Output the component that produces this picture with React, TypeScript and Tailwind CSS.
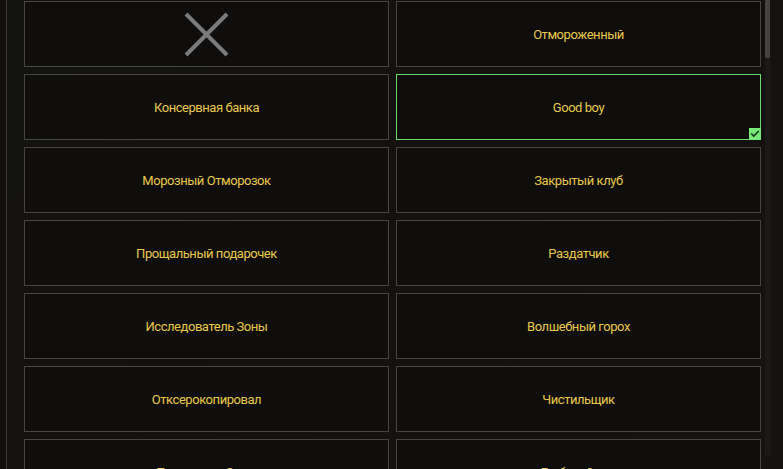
import { Check } from 'lucide-react'

const items: { label: string; cross?: boolean; selected?: boolean }[] = [
  { label: '', cross: true },
  { label: 'Отмороженный' },
  { label: 'Консервная банка' },
  { label: 'Good boy', selected: true },
  { label: 'Морозный Отморозок' },
  { label: 'Закрытый клуб' },
  { label: 'Прощальный подарочек' },
  { label: 'Раздатчик' },
  { label: 'Подрывник Зоны' },
  { label: 'Глубокий сон' },
]

function Card({ label, cross, selected }: { label: string; cross?: boolean; selected?: boolean }) {
  return (
    <div
      className={`relative flex h-[66px] items-center justify-center border bg-[#0f0e0d] ${
        selected ? 'border-[#66d966]' : 'border-[#464544]'
      }`}
    >
      {cross ? (
        <svg width="45" height="45" viewBox="0 0 45 45" className="text-[#7b7b7b]">
          <path d="M2 2 L43 43 M43 2 L2 43" stroke="currentColor" strokeWidth="4" />
        </svg>
      ) : (
        <span className="text-[13px] leading-none tracking-[-0.45px] text-[#e8c84a]" style={{ fontFamily: 'Roboto, "Noto Sans", sans-serif' }}>
          {label}
        </span>
      )}
      {selected && (
        <div className="absolute -bottom-px -right-px flex h-[12px] w-[12px] items-center justify-center bg-[#78e878]">
          <Check size={10} strokeWidth={4} className="text-[#1d3a1d]" />
        </div>
      )}
    </div>
  )
}

const all = [
  ...items.slice(0, 8),
  { label: 'Исследователь Зоны' },
  { label: 'Волшебный горох' },
  { label: 'Отксерокопировал' },
  { label: 'Чистильщик' },
  ...items.slice(8),
]

export default function App() {
  return (
    <div className="flex h-[469px] w-[783px] overflow-hidden bg-[#141210]">
      <div className="w-[7px] shrink-0 border-r border-[#3c3b3a] bg-[#120e0b]" />
      <div className="flex flex-1 bg-gradient-to-br from-[#121211] via-[#131110] to-[#15120f] pl-[17px] pt-[1px]">
        <div className="grid h-max grid-cols-[365px_365px] gap-[7px]">
          {all.map((it, i) => (
            <Card key={i} {...it} />
          ))}
        </div>
        <div className="ml-[4px] h-[455px] w-[5px] -mt-[1px] bg-[#1b1917]">
          <div className="h-[58px] w-full bg-[#444342]" />
        </div>
        <div className="flex-1 bg-[#161210]" />
      </div>
    </div>
  )
}
